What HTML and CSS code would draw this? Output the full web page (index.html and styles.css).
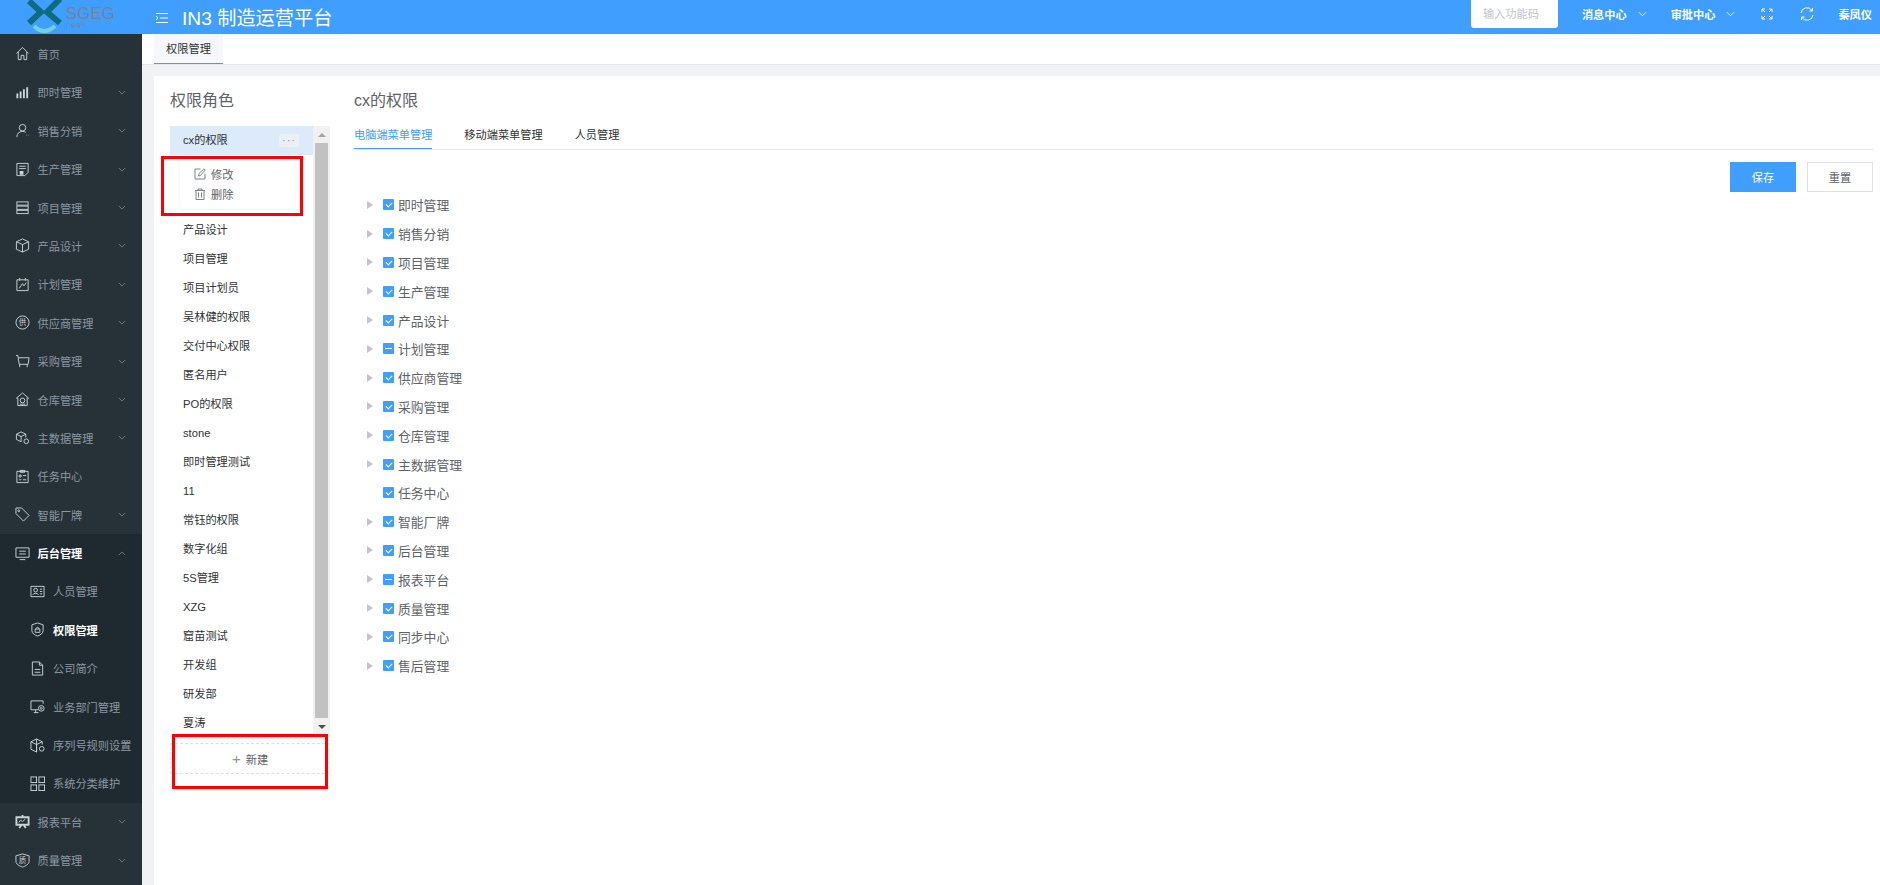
FILE: index.html
```html
<!DOCTYPE html>
<html>
<head>
	<meta charset="utf-8">
	<title>IN3 制造运营平台</title>
	<link rel="stylesheet" href="styles.css">
</head>
<body>
	<div class="header">
		<div class="logo">
			<svg class="logo_mark" viewBox="0 0 40 34">
				<path d="M3 1 L15 12 L3 23" class="logo_x"/>
				<path d="M34 -1 L21 12 L34 23" class="logo_x"/>
				<path d="M8 26 Q18 36 29 26" class="logo_arc"/>
			</svg>
			<div class="logo_text">
				<span class="logo_name">SGEG</span>
				<span class="logo_sub">广电电气</span>
			</div>
		</div>
		<svg class="fold" viewBox="0 0 14 12"><path d="M1 1.500h12M5 6h8M1 10.500h12M1 4l2 2-2 2"/></svg>
		<div class="app_title">IN3 制造运营平台</div>
		<div class="head_right">
			<div class="code_input">输入功能码</div>
			<div class="head_link link_msg">消息中心<svg class="head_chev" viewBox="0 0 10 6"><path d="M1 1l4 4 4-4"/></svg></div>
			<div class="head_link link_chk">审批中心<svg class="head_chev" viewBox="0 0 10 6"><path d="M1 1l4 4 4-4"/></svg></div>
			<svg class="head_icon icon_full" viewBox="0 0 12 12"><path d="M1 4V1h3M8 1h3v3M11 8v3H8M4 11H1V8"/><path d="M1 1l3 3M11 1L8 4M11 11L8 8M1 11l3-3"/></svg>
			<svg class="head_icon icon_sync" viewBox="0 0 14 14"><path d="M1 6A6 6 0 0 1 12 3.500M13 8A6 6 0 0 1 2 10.500"/><path d="M12.500 1V4H9.500M1.500 13V10H4.500"/></svg>
			<div class="head_user">秦凤仪</div>
		</div>
	</div>

	<div class="layout">
		<div class="sidebar">
			<div class="menu_item"><svg class="icon" viewBox="0 0 16 16"><path d="M1.500 8L8 1.500 14.500 8M3.500 6.500V14.500H6.500V10H9.500V14.500H12.500V6.500"/></svg>首页</div>
			<div class="menu_item"><svg class="icon" viewBox="0 0 16 16"><path class="thick" d="M2.500 14V9M6 14V7M9.500 14V4.500M13 14V2.500"/></svg>即时管理<svg class="chev" viewBox="0 0 10 6"><path d="M1 1l4 4 4-4"/></svg></div>
			<div class="menu_item"><svg class="icon" viewBox="0 0 16 16"><circle cx="8" cy="5" r="3.500"/><path d="M2 15c0-4 2.500-6 6-6 1.500 0 2.500.4 3.500 1M12 13h.5M14.500 13h.5"/></svg>销售分销<svg class="chev" viewBox="0 0 10 6"><path d="M1 1l4 4 4-4"/></svg></div>
			<div class="menu_item"><svg class="icon" viewBox="0 0 16 16"><path d="M2 1.500H14V11L10.500 14.500H2Z"/><path d="M4.500 4.500H11.500M4.500 7H11.500"/><path class="thick" d="M5 10.500H9M5 12.500H9"/></svg>生产管理<svg class="chev" viewBox="0 0 10 6"><path d="M1 1l4 4 4-4"/></svg></div>
			<div class="menu_item"><svg class="icon" viewBox="0 0 16 16"><rect x="2" y="2" width="12" height="3.500"/><rect x="2" y="6.500" width="12" height="3.500"/><rect x="2" y="11" width="12" height="3.500"/></svg>项目管理<svg class="chev" viewBox="0 0 10 6"><path d="M1 1l4 4 4-4"/></svg></div>
			<div class="menu_item"><svg class="icon" viewBox="0 0 16 16"><path d="M8 1L14.500 4V12L8 15 1.500 12V4ZM1.500 4L8 7 14.500 4M8 7V15"/></svg>产品设计<svg class="chev" viewBox="0 0 10 6"><path d="M1 1l4 4 4-4"/></svg></div>
			<div class="menu_item"><svg class="icon" viewBox="0 0 16 16"><path d="M2 3H14V14.500H2ZM5 1V4M11 1V4M4.500 12L8 7 9.500 9.500 12 6"/></svg>计划管理<svg class="chev" viewBox="0 0 10 6"><path d="M1 1l4 4 4-4"/></svg></div>
			<div class="menu_item"><svg class="icon" viewBox="0 0 16 16"><circle cx="8" cy="8" r="7"/><text x="8" y="11" class="icon_text">供</text></svg>供应商管理<svg class="chev" viewBox="0 0 10 6"><path d="M1 1l4 4 4-4"/></svg></div>
			<div class="menu_item"><svg class="icon" viewBox="0 0 16 16"><path d="M1 1.500H3L4.500 11H14L15 4H3.500M5 11V14M13 11V14"/></svg>采购管理<svg class="chev" viewBox="0 0 10 6"><path d="M1 1l4 4 4-4"/></svg></div>
			<div class="menu_item"><svg class="icon" viewBox="0 0 16 16"><path d="M1 7L8 1 15 7M3 6V14.500H13V6"/><circle cx="8" cy="9" r="2.500"/><path d="M5 13H11"/></svg>仓库管理<svg class="chev" viewBox="0 0 10 6"><path d="M1 1l4 4 4-4"/></svg></div>
			<div class="menu_item"><svg class="icon" viewBox="0 0 16 16"><path d="M6.500 2L11.500 4.500 6.500 7 1.500 4.500ZM1.500 4.500V10L6.500 12.500M6.500 7V12.500M11.500 4.500V8"/><circle cx="12" cy="12" r="2.500"/></svg>主数据管理<svg class="chev" viewBox="0 0 10 6"><path d="M1 1l4 4 4-4"/></svg></div>
			<div class="menu_item"><svg class="icon" viewBox="0 0 16 16"><path d="M2 2.500H14V14.500H2ZM5.500 1.500H10.500V3.500H5.500ZM4.500 6.500H6.500V8.500H4.500ZM8.500 7H12M4.500 11L5.500 12 7 10.500M8.500 11.500H12"/></svg>任务中心</div>
			<div class="menu_item"><svg class="icon" viewBox="0 0 16 16"><path d="M1 1H7L15 9 9 15 1 7Z"/><circle cx="4" cy="4" r="1"/></svg>智能厂牌<svg class="chev" viewBox="0 0 10 6"><path d="M1 1l4 4 4-4"/></svg></div>

			<div class="menu_group">
				<div class="menu_item open"><svg class="icon" viewBox="0 0 16 16"><path d="M1 2H15V12H1ZM5 14.500H11M4.500 5.500H11.500M4.500 8.500H11.500"/></svg>后台管理<svg class="chev up" viewBox="0 0 10 6"><path d="M1 1l4 4 4-4"/></svg></div>
				<div class="sub_item"><svg class="icon" viewBox="0 0 16 16"><path d="M1 2.500H15V13.500H1Z"/><circle cx="6" cy="6.500" r="2"/><path d="M3 11.500C3 9.500 9 9.500 9 11.500M10.500 5.500H13M10.500 8H13M10.500 10.500H13"/></svg>人员管理</div>
				<div class="sub_item active"><svg class="icon" viewBox="0 0 16 16"><path d="M8 1L14 3V9C14 12 11 14 8 15 5 14 2 12 2 9V3Z"/><path d="M5.500 7.500H10.500V11H5.500ZM6.500 7.500C6.500 5 9.500 5 9.500 7.500"/></svg>权限管理</div>
				<div class="sub_item"><svg class="icon" viewBox="0 0 16 16"><path d="M2.500 1H10L13.500 4.500V15H2.500ZM10 1V4.500H13.500M5 9H11M5 12H11"/></svg>公司简介</div>
				<div class="sub_item"><svg class="icon" viewBox="0 0 16 16"><path d="M9 11.500H1V2H14V5M4 14.500H9M6 11.500V14.500"/><circle cx="12" cy="10" r="3"/><circle cx="12" cy="10" r="1"/></svg>业务部门管理</div>
				<div class="sub_item"><svg class="icon" viewBox="0 0 16 16"><path d="M7 1L13 4V7M7 15L1 12V4L7 1ZM1 4L7 7 13 4M7 7V15"/><circle cx="12.500" cy="11.500" r="2.500"/></svg>序列号规则设置</div>
				<div class="sub_item"><svg class="icon" viewBox="0 0 16 16"><rect x="1" y="1" width="6" height="6"/><rect x="9.500" y="1" width="6" height="6"/><rect x="1" y="9.500" width="6" height="6"/><rect x="9.500" y="9.500" width="6" height="6"/></svg>系统分类维护</div>
			</div>

			<div class="menu_item"><svg class="icon" viewBox="0 0 16 16"><path class="thick" d="M1.500 3.500H14.500V11.500H1.500ZM8 1V3M4.500 15L7 11.500M11.500 15L9 11.500"/><path d="M4 9L6 6.500 8 8 11 5.500"/></svg>报表平台<svg class="chev" viewBox="0 0 10 6"><path d="M1 1l4 4 4-4"/></svg></div>
			<div class="menu_item"><svg class="icon" viewBox="0 0 16 16"><path d="M8 1L15 3V9C15 12 11 14 8 15 5 14 1 12 1 9V3Z"/><text x="8" y="11" class="icon_text">质</text></svg>质量管理<svg class="chev" viewBox="0 0 10 6"><path d="M1 1l4 4 4-4"/></svg></div>
		</div>

		<div class="main">
			<div class="tab_bar"><div class="page_tab">权限管理</div></div>
			<div class="panel">
				<div class="role_col">
					<div class="col_title">权限角色</div>
					<div class="role_box">
						<div class="role_list">
							<div class="role_row selected">cx的权限<span class="more">···</span></div>
							<div class="role_row covered"></div>
							<div class="role_row covered"></div>
							<div class="role_row">产品设计</div>
							<div class="role_row">项目管理</div>
							<div class="role_row">项目计划员</div>
							<div class="role_row">吴林健的权限</div>
							<div class="role_row">交付中心权限</div>
							<div class="role_row">匿名用户</div>
							<div class="role_row">PO的权限</div>
							<div class="role_row">stone</div>
							<div class="role_row">即时管理测试</div>
							<div class="role_row">11</div>
							<div class="role_row">常钰的权限</div>
							<div class="role_row">数字化组</div>
							<div class="role_row">5S管理</div>
							<div class="role_row">XZG</div>
							<div class="role_row">窟苗测试</div>
							<div class="role_row">开发组</div>
							<div class="role_row">研发部</div>
							<div class="role_row">夏涛</div>
						</div>
						<div class="scrollbar">
							<div class="scroll_btn"><span class="arrow_up"></span></div>
							<div class="scroll_thumb"></div>
							<div class="scroll_btn"><span class="arrow_down"></span></div>
						</div>
						<div class="popover">
							<div class="pop_row"><svg class="pop_icon" viewBox="0 0 12 12"><path d="M11 5.500V11H1V1H6.500M4.500 8L5 5.500 10 .8 11.200 2 6.500 7.500Z"/></svg>修改</div>
							<div class="pop_row"><svg class="pop_icon" viewBox="0 0 12 12"><path d="M1 2.500H11M4 2.500V1H8V2.500M2 2.500V11.500H10V2.500M4.500 4.500V9.500M7.500 4.500V9.500"/></svg>删除</div>
						</div>
						<div class="mark mark_pop"></div>
					</div>
					<div class="new_btn"><span class="plus">+</span>新建</div>
					<div class="mark mark_new"></div>
				</div>

				<div class="right_col">
					<div class="col_title">cx的权限</div>
					<div class="tabs">
						<div class="tab on">电脑端菜单管理</div>
						<div class="tab">移动端菜单管理</div>
						<div class="tab">人员管理</div>
					</div>
					<div class="actions">
						<button class="btn btn_save">保存</button>
						<button class="btn">重置</button>
					</div>
					<div class="tree">
						<div class="tree_row"><span class="caret"></span><span class="check"></span>即时管理</div>
						<div class="tree_row"><span class="caret"></span><span class="check"></span>销售分销</div>
						<div class="tree_row"><span class="caret"></span><span class="check"></span>项目管理</div>
						<div class="tree_row"><span class="caret"></span><span class="check"></span>生产管理</div>
						<div class="tree_row"><span class="caret"></span><span class="check"></span>产品设计</div>
						<div class="tree_row"><span class="caret"></span><span class="check half"></span>计划管理</div>
						<div class="tree_row"><span class="caret"></span><span class="check"></span>供应商管理</div>
						<div class="tree_row"><span class="caret"></span><span class="check"></span>采购管理</div>
						<div class="tree_row"><span class="caret"></span><span class="check"></span>仓库管理</div>
						<div class="tree_row"><span class="caret"></span><span class="check"></span>主数据管理</div>
						<div class="tree_row"><span class="caret none"></span><span class="check"></span>任务中心</div>
						<div class="tree_row"><span class="caret"></span><span class="check"></span>智能厂牌</div>
						<div class="tree_row"><span class="caret"></span><span class="check"></span>后台管理</div>
						<div class="tree_row"><span class="caret"></span><span class="check half"></span>报表平台</div>
						<div class="tree_row"><span class="caret"></span><span class="check"></span>质量管理</div>
						<div class="tree_row"><span class="caret"></span><span class="check"></span>同步中心</div>
						<div class="tree_row"><span class="caret"></span><span class="check"></span>售后管理</div>
					</div>
				</div>
			</div>
		</div>
	</div>
</body>
</html>
```

FILE: styles.css
```css
* {
	box-sizing: border-box;
}

html, body {
	margin: 0;
	height: 885px;
	overflow: hidden;
}

body {
	font-family: "Liberation Sans", "Noto Sans CJK SC", sans-serif;
	font-size: 11.2px;
	color: #303133;
	background: #f0f2f5;
}

svg {
	fill: none;
	stroke-width: 1;
}

/* top bar */
.header {
	height: 34px;
	background: #409eff;
	color: #fff;
	display: flex;
	align-items: center;
	overflow: hidden;
}

.logo {
	width: 155px;
	height: 34px;
	padding-left: 26px;
	display: flex;
	flex-shrink: 0;
}

.logo_mark {
	width: 40px;
	height: 34px;
	flex-shrink: 0;
}

.logo_x {
	stroke: #0d6c80;
	stroke-width: 6;
}

.logo_arc {
	stroke: #72d3d6;
	stroke-width: 4;
}

.logo_text {
	display: flex;
	flex-direction: column;
	padding-top: 4px;
	color: #77838e;
}

.logo_name {
	font-size: 16.500px;
	line-height: 18px;
	letter-spacing: .3px;
}

.logo_sub {
	font-size: 5px;
	line-height: 6px;
}

.fold {
	width: 14px;
	height: 12px;
	margin-top: 2px;
	stroke: #fff;
	flex-shrink: 0;
}

.app_title {
	font-size: 19.2px;
	margin-left: 13px;
	white-space: nowrap;
}

.head_right {
	margin-left: auto;
	display: flex;
	align-items: center;
	height: 34px;
	padding-right: 8px;
}

.code_input {
	width: 87px;
	height: 28px;
	margin-top: -6px;
	padding-left: 12px;
	line-height: 28px;
	background: #fff;
	border-radius: 0 0 3px 3px;
	color: #c0c4cc;
}

.head_link {
	display: flex;
	align-items: center;
	font-weight: bold;
	white-space: nowrap;
	margin-top: -6px;
}

.link_msg {
	margin-left: 24px;
}

.link_chk {
	margin-left: 24px;
}

.head_chev {
	width: 9px;
	height: 6px;
	margin-left: 11px;
	stroke: #fff;
}

.head_icon {
	stroke: #fff;
	margin-top: -6px;
	flex-shrink: 0;
}

.icon_full {
	width: 12px;
	height: 12px;
	margin-left: 26px;
}

.icon_sync {
	width: 14px;
	height: 14px;
	margin-left: 27px;
}

.head_user {
	margin-left: 24px;
	margin-top: -6px;
	font-weight: bold;
	white-space: nowrap;
}

/* page frame */
.layout {
	display: flex;
	height: 851px;
}

.sidebar {
	width: 142px;
	flex-shrink: 0;
	padding-top: .8px;
	background: #263238;
	overflow: hidden;
}

.menu_item, .sub_item {
	height: 38.4px;
	display: flex;
	align-items: center;
	position: relative;
	color: #8b98a2;
	white-space: nowrap;
}

.menu_item {
	padding-left: 37.500px;
}

.sub_item {
	padding-left: 53px;
}

.icon {
	width: 15px;
	height: 15px;
	stroke: #ccd3d7;
	flex-shrink: 0;
	margin-right: 8px;
	margin-left: -23px;
}

.thick {
	stroke-width: 2;
}

.icon_text {
	font-size: 8px;
	text-anchor: middle;
	fill: #ccd3d7;
	stroke: none;
}

.chev {
	width: 8px;
	height: 5px;
	margin-left: auto;
	margin-right: 16px;
	stroke: #7d8a93;
}

.chev.up {
	transform: rotate(180deg);
}

.menu_group {
	background: #1f2a30;
}

.menu_item.open, .sub_item.active {
	color: #fff;
	font-weight: bold;
}

.main {
	flex: 1;
	display: flex;
	flex-direction: column;
	min-width: 0;
}

.tab_bar {
	height: 31px;
	padding-left: 12px;
	background: #fff;
	border-bottom: 1px solid #e4e7ed;
}

.page_tab {
	width: 69px;
	height: 30px;
	line-height: 30px;
	text-align: center;
	background: #f5f7fa;
	border-bottom: 1px solid #409eff;
}

.panel {
	flex: 1;
	display: flex;
	margin: 11px 0 0 12px;
	background: #fff;
}

/* role list */
.role_col {
	width: 160px;
	margin-left: 16px;
	flex-shrink: 0;
	position: relative;
}

.col_title {
	height: 48px;
	line-height: 50px;
	font-size: 16px;
	color: #606266;
}

.role_box {
	margin-top: 2px;
	height: 609px;
	display: flex;
	position: relative;
}

.role_list {
	width: 143px;
}

.role_row {
	height: 29px;
	line-height: 29px;
	padding-left: 13px;
	position: relative;
}

/* these two sit under the popover, the names cannot be seen */
.role_row.covered {
	height: 30.500px;
}

.role_row.selected {
	background: #dceafa;
}

.more {
	position: absolute;
	right: 14px;
	top: 8px;
	width: 20px;
	height: 13px;
	line-height: 12px;
	text-align: center;
	border-radius: 3px;
	background: #eceff3;
	color: #909399;
	letter-spacing: 1px;
}

.scrollbar {
	width: 17px;
	display: flex;
	flex-direction: column;
	background: #f1f1f1;
}

.scroll_btn {
	height: 17px;
	display: flex;
	align-items: center;
	justify-content: center;
}

.arrow_up, .arrow_down {
	width: 0;
	height: 0;
	border-left: 4px solid transparent;
	border-right: 4px solid transparent;
}

.arrow_up {
	border-bottom: 4px solid #a3a3a3;
}

.arrow_down {
	border-top: 4px solid #505050;
}

.scroll_thumb {
	flex: 1;
	margin: 0 2px;
	background: #c1c1c1;
}

.popover {
	position: absolute;
	left: 10px;
	top: 33px;
	width: 118px;
	height: 50px;
	padding: 5px 14px;
	background: #fff;
	border-radius: 3px;
	box-shadow: 0 1px 3px rgba(0, 0, 0, .06);
	color: #606266;
}

.pop_row {
	height: 20px;
	display: flex;
	align-items: center;
}

.pop_icon {
	width: 12px;
	height: 12px;
	margin-right: 5px;
	stroke: #7d8288;
}

.new_btn {
	margin-top: 8px;
	height: 31px;
	display: flex;
	align-items: center;
	justify-content: center;
	border-top: 1px dashed #dcdfe6;
	border-bottom: 1px dashed #dcdfe6;
	border-left: 1px dashed #e8eaee;
	border-right: 1px dashed #e8eaee;
	color: #606266;
}

.plus {
	font-size: 15px;
	color: #909399;
	margin-right: 5px;
	font-weight: normal;
}

/* red annotation frames drawn on the screenshot */
.mark {
	position: absolute;
	border: 3px solid #f00;
	pointer-events: none;
}

.mark_pop {
	left: -9px;
	top: 30px;
	width: 142px;
	height: 60px;
}

.mark_new {
	left: 2px;
	top: 658px;
	width: 156px;
	height: 55px;
}

/* right side */
.right_col {
	flex: 1;
	margin: 0 7px 0 24px;
	min-width: 0;
}

.tabs {
	display: flex;
	height: 26px;
	border-bottom: 1px solid #e4e7ed;
}

.tab {
	height: 25px;
	line-height: 22px;
	margin-right: 32px;
}

.tab.on {
	color: #409eff;
	border-bottom: 1px solid #409eff;
}

.actions {
	display: flex;
	justify-content: flex-end;
	gap: 11px;
	margin-top: 12px;
}

.btn {
	width: 66px;
	height: 30px;
	padding: 0;
	font: inherit;
	color: #606266;
	background: #fff;
	border: 1px solid #dcdfe6;
}

.btn_save {
	color: #fff;
	background: #409eff;
	border-color: #409eff;
}

.tree {
	margin-top: -1.500px;
}

.tree_row {
	height: 28.8px;
	display: flex;
	align-items: center;
	padding-left: 13px;
	font-size: 12.8px;
	color: #606266;
}

.caret {
	width: 0;
	height: 0;
	border-top: 4px solid transparent;
	border-bottom: 4px solid transparent;
	border-left: 6px solid #c0c4cc;
	margin-right: 10px;
}

.caret.none {
	border-left-color: transparent;
}

.check {
	width: 11px;
	height: 11px;
	margin-right: 4px;
	border-radius: 1px;
	background: #409eff;
	position: relative;
}

.check::after {
	content: "";
	position: absolute;
	left: 4px;
	top: 2px;
	width: 3px;
	height: 5px;
	border: solid #fff;
	border-width: 0 1px 1px 0;
	transform: rotate(45deg);
}

.check.half::after {
	left: 2px;
	top: 5px;
	width: 7px;
	height: 1px;
	border-width: 1px 0 0;
	transform: none;
}
```
